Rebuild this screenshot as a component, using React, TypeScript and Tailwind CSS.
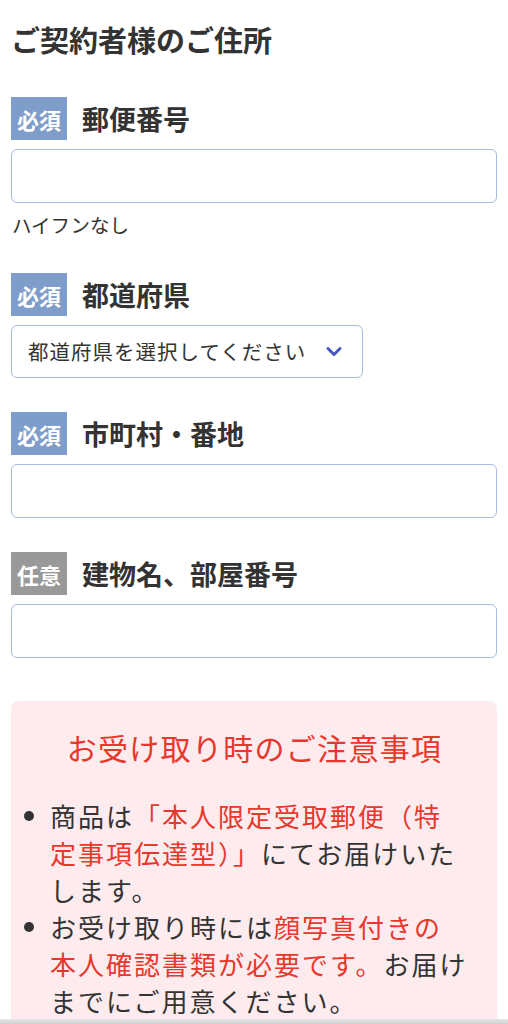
import React from "react";

const jp = { fontFamily: '"Noto Sans CJK JP", "Noto Sans", sans-serif' };

function Badge({ optional }: { optional?: boolean }) {
  return (
    <span
      className={
        "flex h-[43px] w-[56px] shrink-0 items-center justify-center text-[22px] font-bold leading-none text-white " +
        (optional ? "bg-[#999999]" : "bg-[#7f9dca]")
      }
    >
      {optional ? "任意" : "必須"}
    </span>
  );
}

function FieldLabel({ label, optional }: { label: string; optional?: boolean }) {
  return (
    <div className="flex h-[43px] items-center gap-[15px]">
      <Badge optional={optional} />
      <span className="text-[27px] font-bold leading-[40px] text-[#333]">{label}</span>
    </div>
  );
}

function TextInput() {
  return (
    <input
      type="text"
      className="mt-[9px] block h-[54px] w-full rounded-[6px] border border-[#a9bbe0] bg-white px-3 text-[20px] outline-none"
    />
  );
}

export default function App() {
  return (
    <main className="min-h-screen bg-white px-[11px] text-[#333]" style={jp}>
      {/* Heading */}
      <h1 className="pt-[19px] text-[29px] font-bold leading-[40px] text-[#333]">ご契約者様のご住所</h1>

      {/* 郵便番号 */}
      <section className="mt-[38px]">
        <FieldLabel label="郵便番号" />
        <TextInput />
        <p className="mt-[8px] pl-[1px] text-[19.5px] leading-[28px] text-[#333]">ハイフンなし</p>
      </section>

      {/* 都道府県 */}
      <section className="mt-[34px]">
        <FieldLabel label="都道府県" />
        <button className="mt-[9px] flex h-[53px] w-[352px] items-center rounded-[6px] border border-[#a9bbe0] bg-white pl-[16px] text-left">
          <span className="text-[20.5px] leading-none tracking-[1px] text-[#333]">都道府県を選択してください</span>
          <svg className="ml-[20px]" width="16" height="11" viewBox="0 0 16 11" fill="none">
            <path d="M2 2.5 8 8.5 14 2.5" stroke="#4557c0" strokeWidth="3" strokeLinecap="round" strokeLinejoin="round" />
          </svg>
        </button>
      </section>

      {/* 市町村・番地 */}
      <section className="mt-[34px]">
        <FieldLabel label="市町村・番地" />
        <TextInput />
      </section>

      {/* 建物名、部屋番号 */}
      <section className="mt-[34px]">
        <FieldLabel label="建物名、部屋番号" optional />
        <TextInput />
      </section>

      {/* Notice */}
      <section className="mt-[43px] rounded-[7px] bg-[#fdebee] pb-[40px] pl-[13px] pr-[12px] pt-[26px]">
        <h2 className="text-center text-[30px] leading-[40px] tracking-[1.3px] text-[#e8372b]">お受け取り時のご注意事項</h2>
        <ul className="mt-[30px] text-[26px] leading-[37px] tracking-[2px] text-[#333]">
          <li className="flex">
            <span className="flex h-[37px] w-[26px] shrink-0 items-center">
              <span className="h-[10px] w-[10px] rounded-full bg-[#333]" />
            </span>
            <span>
              商品は<span className="text-[#e8372b]">「本人限定受取郵便（特<br />定事項伝達型）」</span>にてお届けいた<br />します。
            </span>
          </li>
          <li className="flex">
            <span className="flex h-[37px] w-[26px] shrink-0 items-center">
              <span className="h-[10px] w-[10px] rounded-full bg-[#333]" />
            </span>
            <span>
              お受け取り時には<span className="text-[#e8372b]">顔写真付きの<br />本人確認書類が必要です。</span>お届け<br />までにご用意ください。
            </span>
          </li>
        </ul>
      </section>

      {/* bottom bar shadow */}
      <div className="fixed bottom-0 left-0 right-0 h-[5px] bg-gradient-to-b from-[#e6e6e6] to-[#cfcfcf]" />
    </main>
  );
}
